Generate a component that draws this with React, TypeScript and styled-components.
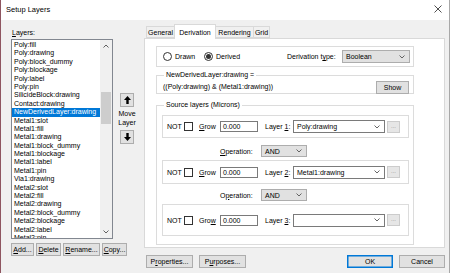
import styled, { createGlobalStyle } from "styled-components";

const GlobalStyle = createGlobalStyle`
  body {
    margin: 0;
    background: #f0f0f0;
    font-family: "Liberation Sans", Arial, sans-serif;
    font-size: 7px;
    color: #000;
  }
  * { box-sizing: border-box; }
`;

const Window = styled.div`
  width: 450px;
  height: 273px;
  display: flex;
  flex-direction: column;
  background: #f0f0f0;
  border-left: 1px solid #8e5560;
  border-right: 1px solid #a8a8a8;
  overflow: hidden;
`;

const TitleBar = styled.div`
  height: 20px;
  flex-shrink: 0;
  background: #fff;
  display: flex;
  align-items: center;
  justify-content: space-between;
  padding: 0 7px 2px 5px;
  font-size: 7.5px;
`;

const Body = styled.div`
  flex: 1;
  display: flex;
  padding: 0 4px 0 10px;
`;

const LeftColumn = styled.div`
  width: 123px;
  display: flex;
  flex-direction: column;
  padding-top: 9px;
`;

const FieldLabel = styled.div`
  height: 8px;
  line-height: 8px;
  padding-left: 1px;
  margin-bottom: 2px;
`;

const U = styled.span`
  text-decoration: underline;
`;

const ListRow = styled.div`
  display: flex;
  gap: 7px;
`;

const ListBox = styled.div`
  width: 103px;
  height: 200px;
  border: 1px solid #828790;
  background: #fff;
  display: flex;
  overflow: hidden;
`;

const ListItems = styled.div`
  flex: 1;
  padding-top: 1px;
  overflow: hidden;
`;

const ListItem = styled.div<{ $selected?: boolean }>`
  height: 8.4px;
  line-height: 8.4px;
  padding-left: 2px;
  white-space: nowrap;
  background: ${(p) => (p.$selected ? "#0078d7" : "transparent")};
  color: ${(p) => (p.$selected ? "#fff" : "#000")};
`;

const ScrollBar = styled.div`
  width: 12px;
  background: #f0f0f0;
  display: flex;
  flex-direction: column;
  align-items: center;
`;

const ScrollArrow = styled.div`
  height: 12px;
  width: 100%;
  display: flex;
  align-items: center;
  justify-content: center;
`;

const ScrollTrack = styled.div`
  flex: 1;
  width: 100%;
  padding: 40px 1px 0;
`;

const Thumb = styled.div`
  height: 32px;
  background: #cdcdcd;
`;

const MoveColumn = styled.div`
  width: 14px;
  padding-top: 54px;
  display: flex;
  flex-direction: column;
  align-items: center;
`;

const ArrowButton = styled.div`
  width: 14px;
  height: 14px;
  background: #e1e1e1;
  border: 1px solid #adadad;
  display: flex;
  align-items: center;
  justify-content: center;
`;

const MoveText = styled.div`
  text-align: center;
  line-height: 9px;
  margin: 2px 0 3px;
  white-space: nowrap;
`;

const ButtonRow = styled.div<{ $top: number }>`
  display: flex;
  gap: 2px;
  margin-top: ${(p) => p.$top}px;
`;

const Button = styled.div<{ $w: number; $ml?: number; $default?: boolean }>`
  width: ${(p) => p.$w}px;
  height: 13px;
  margin-left: ${(p) => p.$ml ?? 0}px;
  background: #e1e1e1;
  border: 1px solid ${(p) => (p.$default ? "#0078d7" : "#adadad")};
  box-shadow: ${(p) => (p.$default ? "inset 0 0 0 0.5px #0078d7" : "none")};
  display: flex;
  align-items: center;
  justify-content: center;
  white-space: nowrap;
`;

const RightColumn = styled.div`
  flex: 1;
  margin-left: 10px;
  padding-top: 3px;
  display: flex;
  flex-direction: column;
`;

const TabStrip = styled.div`
  height: 15px;
  display: flex;
  align-items: flex-end;
  padding-left: 2px;
  position: relative;
  z-index: 1;
`;

const Tab = styled.div<{ $w: number; $active?: boolean }>`
  width: ${(p) => p.$w}px;
  height: ${(p) => (p.$active ? 15 : 12)}px;
  margin-bottom: ${(p) => (p.$active ? -1 : 0)}px;
  margin-right: -1px;
  border: 1px solid #d9d9d9;
  border-bottom: ${(p) => (p.$active ? "none" : "1px solid #d9d9d9")};
  background: ${(p) => (p.$active ? "#fff" : "#f0f0f0")};
  display: flex;
  align-items: center;
  justify-content: center;
  padding-top: ${(p) => (p.$active ? 0 : 1)}px;
`;

const Panel = styled.div`
  height: 210px;
  background: #fff;
  border: 1px solid #d9d9d9;
  padding: 7px 0 0 11px;
`;

const ModeBox = styled.div`
  width: 258px;
  height: 21px;
  border: 1px solid #dcdcdc;
  display: flex;
  align-items: center;
  padding: 0 3px 0 6px;
`;

const Radio = styled.div<{ $checked?: boolean }>`
  width: 9px;
  height: 9px;
  border-radius: 50%;
  border: 1px solid #333;
  display: flex;
  align-items: center;
  justify-content: center;
  margin-right: 3px;
  &::after {
    content: "";
    width: 5px;
    height: 5px;
    border-radius: 50%;
    background: ${(p) => (p.$checked ? "#333" : "transparent")};
  }
`;

const RadioLabel = styled.div<{ $w: number }>`
  display: flex;
  align-items: center;
  width: ${(p) => p.$w}px;
`;

const Spacer = styled.div`
  flex: 1;
`;

const Combo = styled.div<{ $w: number; $flat?: boolean; $h?: number }>`
  width: ${(p) => p.$w}px;
  height: ${(p) => p.$h ?? 13}px;
  border: 1px solid ${(p) => (p.$flat ? "#adadad" : "#7a7a7a")};
  background: ${(p) => (p.$flat ? "#e1e1e1" : "#fff")};
  display: flex;
  align-items: center;
  justify-content: space-between;
  padding: 0 4px 0 3px;
  white-space: nowrap;
`;

const Group = styled.fieldset<{ $top: number; $h: number }>`
  width: 258px;
  height: ${(p) => p.$h}px;
  margin: ${(p) => p.$top}px 0 0;
  padding: 0 4px 0 5px;
  border: 1px solid #dcdcdc;
  min-width: 0;
`;

const Legend = styled.legend`
  padding: 0 2px;
  margin-left: 2px;
  line-height: 8px;
`;

const ExprRow = styled.div`
  display: flex;
  align-items: flex-start;
  justify-content: space-between;
  padding: 0 0 0 1px;
`;

const ExprText = styled.div`
  padding-top: 4px;
`;

const ExprButton = styled(Button)`
  margin-top: 2px;
`;

const SourceBox = styled.div<{ $h: number; $top: number }>`
  height: ${(p) => p.$h}px;
  margin-top: ${(p) => p.$top}px;
  border: 1px solid #dcdcdc;
  display: flex;
  align-items: center;
  padding-left: 4px;
`;

const Label = styled.div<{ $w: number; $ml?: number }>`
  width: ${(p) => p.$w}px;
  margin-left: ${(p) => p.$ml ?? 0}px;
  white-space: nowrap;
`;

const Check = styled.div`
  width: 9px;
  height: 9px;
  border: 1px solid #333;
  background: #fff;
`;

const TextInput = styled.div`
  width: 38px;
  height: 11px;
  border: 1px solid #7a7a7a;
  background: #fff;
  display: flex;
  align-items: center;
  padding-left: 2px;
`;

const DotsButton = styled.div`
  width: 13px;
  height: 12px;
  margin-left: 2px;
  border: 1px solid #cccccc;
  background: #e6e6e6;
  color: #8a8a8a;
  display: flex;
  align-items: center;
  justify-content: center;
  font-size: 6px;
  padding-bottom: 2px;
`;

const OpRow = styled.div<{ $top: number }>`
  display: flex;
  align-items: center;
  margin-top: ${(p) => p.$top}px;
  padding-left: 58px;
`;

const FooterRow = styled.div`
  display: flex;
  margin-top: 7px;
  padding-left: 2px;
`;

const Chevron = () => (
  <svg width="6" height="4" viewBox="0 0 6 4">
    <polyline points="0.5,0.5 3,3 5.5,0.5" fill="none" stroke="#555" strokeWidth="0.9" />
  </svg>
);

const ScrollChevron = ({ up }: { up?: boolean }) => (
  <svg width="6" height="4" viewBox="0 0 6 4">
    <polyline
      points={up ? "0.5,3.5 3,1 5.5,3.5" : "0.5,0.5 3,3 5.5,0.5"}
      fill="none"
      stroke="#606060"
      strokeWidth="1"
    />
  </svg>
);

const MoveArrow = ({ down }: { down?: boolean }) => (
  <svg width="7" height="8" viewBox="0 0 7 8">
    <path
      d="M3.5 0 L7 4 H4.7 V8 H2.3 V4 H0 Z"
      fill="#000"
      transform={down ? "rotate(180 3.5 4)" : undefined}
    />
  </svg>
);

const CloseIcon = () => (
  <svg width="8" height="8" viewBox="0 0 8 8">
    <path d="M0.5 0.5 L7.5 7.5 M7.5 0.5 L0.5 7.5" stroke="#222" strokeWidth="0.8" />
  </svg>
);

const layers = [
  "Poly:fill",
  "Poly:drawing",
  "Poly:block_dummy",
  "Poly:blockage",
  "Poly:label",
  "Poly:pin",
  "SilicideBlock:drawing",
  "Contact:drawing",
  "NewDerivedLayer:drawing",
  "Metal1:slot",
  "Metal1:fill",
  "Metal1:drawing",
  "Metal1:block_dummy",
  "Metal1:blockage",
  "Metal1:label",
  "Metal1:pin",
  "Via1:drawing",
  "Metal2:slot",
  "Metal2:fill",
  "Metal2:drawing",
  "Metal2:block_dummy",
  "Metal2:blockage",
  "Metal2:label",
  "Metal2:pin",
];

const sources = [
  { n: "1", value: "Poly:drawing", grow: <><U>G</U>row</>, h: 23, top: 6 },
  { n: "2", value: "Metal1:drawing", grow: <><U>G</U>row</>, h: 24, top: 3 },
  { n: "3", value: "", grow: <>Gro<U>w</U></>, h: 32, top: 3 },
];

function SourceLayer({ n, value, grow, h, top }: (typeof sources)[number]) {
  return (
    <SourceBox $h={h} $top={top}>
      <Label $w={17}>NOT</Label>
      <Check />
      <Label $w={21} $ml={6}>{grow}</Label>
      <TextInput>0.000</TextInput>
      <Label $w={28} $ml={7}>
        Layer <U>{n}</U>:
      </Label>
      <Combo $w={92}>
        <span>{value}</span>
        <Chevron />
      </Combo>
      <DotsButton>...</DotsButton>
    </SourceBox>
  );
}

function Operation({ top, label }: { top: number; label: React.ReactNode }) {
  return (
    <OpRow $top={top}>
      <Label $w={41}>{label}</Label>
      <Combo $w={46} $h={12} $flat>
        <span>AND</span>
        <Chevron />
      </Combo>
    </OpRow>
  );
}

export default function App() {
  return (
    <>
      <GlobalStyle />
      <Window>
        <TitleBar>
          <span>Setup Layers</span>
          <CloseIcon />
        </TitleBar>
        <Body>
          <LeftColumn>
            <FieldLabel>
              <U>L</U>ayers:
            </FieldLabel>
            <ListRow>
              <ListBox>
                <ListItems>
                  {layers.map((l) => (
                    <ListItem key={l} $selected={l === "NewDerivedLayer:drawing"}>
                      {l}
                    </ListItem>
                  ))}
                </ListItems>
                <ScrollBar>
                  <ScrollArrow>
                    <ScrollChevron up />
                  </ScrollArrow>
                  <ScrollTrack>
                    <Thumb />
                  </ScrollTrack>
                  <ScrollArrow>
                    <ScrollChevron />
                  </ScrollArrow>
                </ScrollBar>
              </ListBox>
              <MoveColumn>
                <ArrowButton>
                  <MoveArrow />
                </ArrowButton>
                <MoveText>
                  Move
                  <br />
                  Layer
                </MoveText>
                <ArrowButton>
                  <MoveArrow down />
                </ArrowButton>
              </MoveColumn>
            </ListRow>
            <ButtonRow $top={4}>
              <Button $w={23}>
                <U>A</U>dd...
              </Button>
              <Button $w={25}>
                <U>D</U>elete
              </Button>
              <Button $w={37}>
                <U>R</U>ename...
              </Button>
              <Button $w={25}>
                <U>C</U>opy...
              </Button>
            </ButtonRow>
          </LeftColumn>
          <RightColumn>
            <TabStrip>
              <Tab $w={29}>General</Tab>
              <Tab $w={42} $active>
                Derivation
              </Tab>
              <Tab $w={39}>Rendering</Tab>
              <Tab $w={17}>Grid</Tab>
            </TabStrip>
            <Panel>
              <ModeBox>
                <RadioLabel $w={41}>
                  <Radio />
                  Drawn
                </RadioLabel>
                <RadioLabel $w={50}>
                  <Radio $checked />
                  Derived
                </RadioLabel>
                <Spacer />
                <Label $w={55}>
                  Derivation t<U>y</U>pe:
                </Label>
                <Combo $w={68} $flat>
                  <span>Boolean</span>
                  <Chevron />
                </Combo>
              </ModeBox>
              <Group $top={4} $h={23}>
                <Legend>NewDerivedLayer:drawing =</Legend>
                <ExprRow>
                  <ExprText>((Poly:drawing) &amp; (Metal1:drawing))</ExprText>
                  <ExprButton $w={33}>Show</ExprButton>
                </ExprRow>
              </Group>
              <Group $top={7} $h={144}>
                <Legend>Source layers (Microns)</Legend>
                {sources.slice(0, 1).map((s) => (
                  <SourceLayer key={s.n} {...s} />
                ))}
                <Operation
                  top={7}
                  label={
                    <>
                      <U>O</U>peration:
                    </>
                  }
                />
                {sources.slice(1, 2).map((s) => (
                  <SourceLayer key={s.n} {...s} />
                ))}
                <Operation
                  top={5}
                  label={
                    <>
                      O<U>p</U>eration:
                    </>
                  }
                />
                {sources.slice(2).map((s) => (
                  <SourceLayer key={s.n} {...s} />
                ))}
              </Group>
            </Panel>
            <FooterRow>
              <Button $w={47}>
                P<U>r</U>operties...
              </Button>
              <Button $w={47} $ml={6}>
                P<U>u</U>rposes...
              </Button>
              <Spacer />
              <Button $w={46} $default>
                OK
              </Button>
              <Button $w={46} $ml={6}>
                Cancel
              </Button>
            </FooterRow>
          </RightColumn>
        </Body>
      </Window>
    </>
  );
}
